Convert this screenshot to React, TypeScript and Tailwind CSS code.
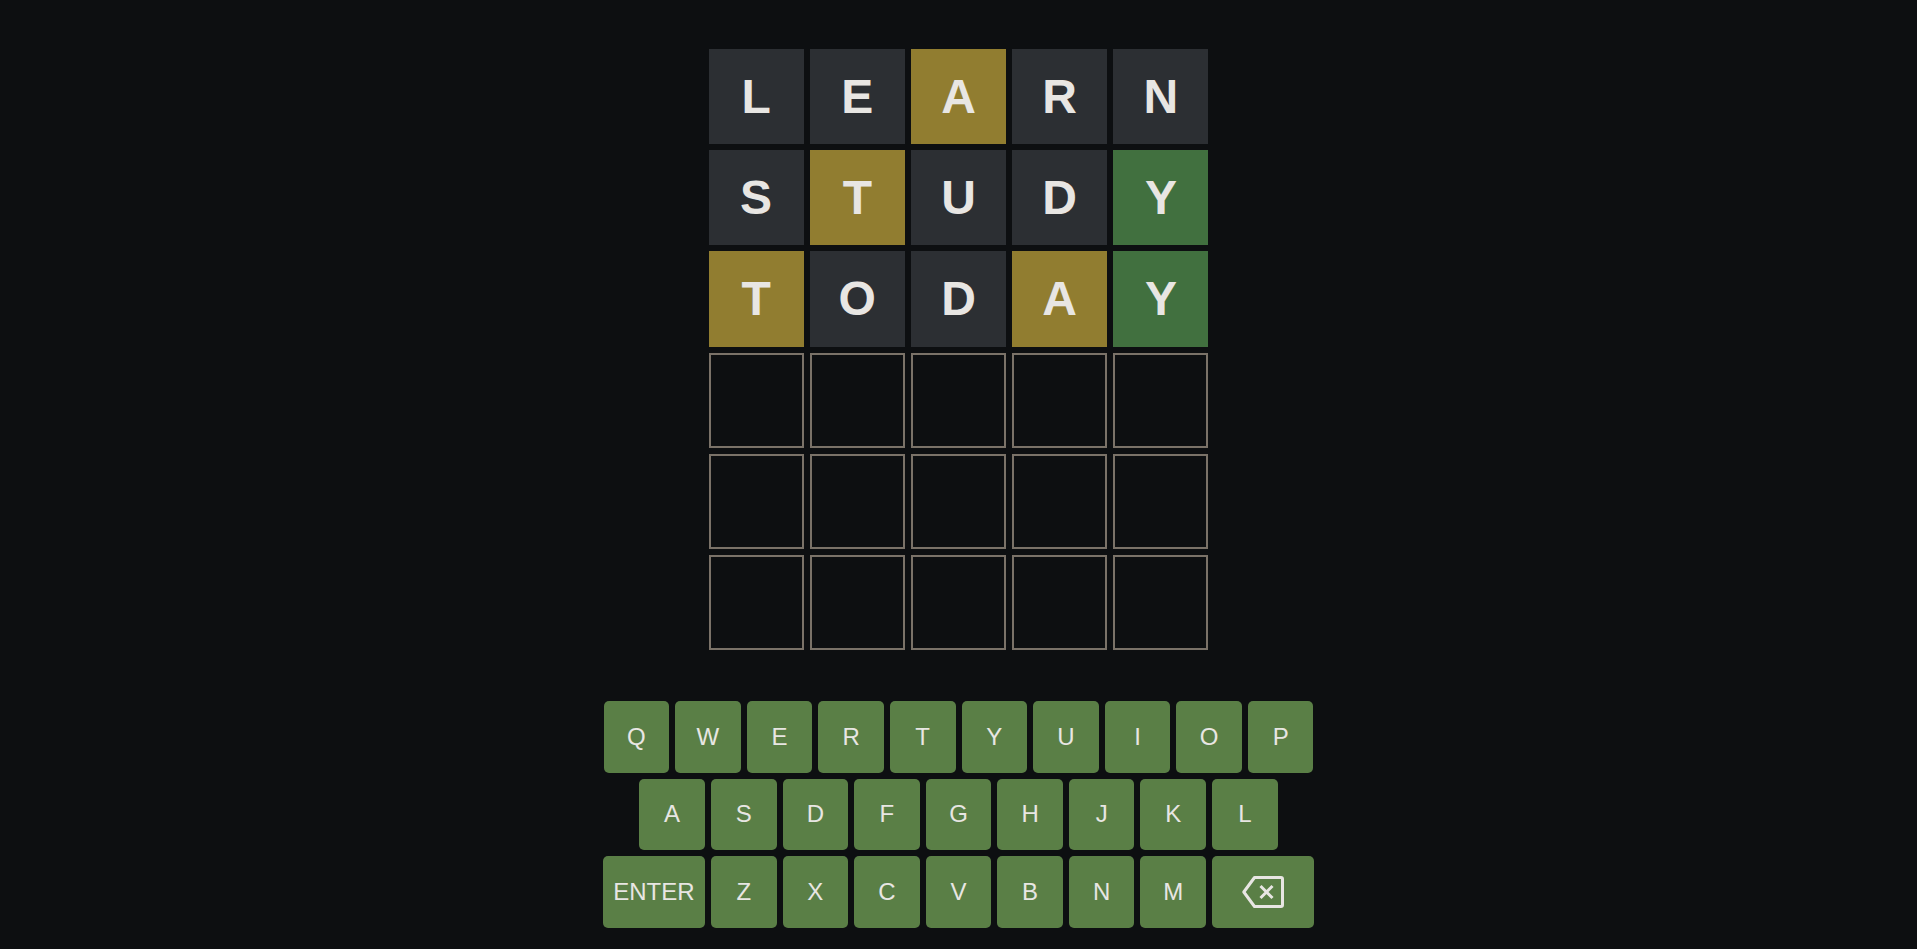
import React from 'react';

type TileState = 'absent' | 'present' | 'correct' | 'empty';

const guesses: { letter: string; state: TileState }[][] = [
    [
        { letter: 'L', state: 'absent' },
        { letter: 'E', state: 'absent' },
        { letter: 'A', state: 'present' },
        { letter: 'R', state: 'absent' },
        { letter: 'N', state: 'absent' },
    ],
    [
        { letter: 'S', state: 'absent' },
        { letter: 'T', state: 'present' },
        { letter: 'U', state: 'absent' },
        { letter: 'D', state: 'absent' },
        { letter: 'Y', state: 'correct' },
    ],
    [
        { letter: 'T', state: 'present' },
        { letter: 'O', state: 'absent' },
        { letter: 'D', state: 'absent' },
        { letter: 'A', state: 'present' },
        { letter: 'Y', state: 'correct' },
    ],
];

const tileClass: Record<TileState, string> = {
    absent: 'bg-[#2c2f33]',
    present: 'bg-[#917d30]',
    correct: 'bg-[#41703f]',
    empty: 'border-2 border-[#7a7268] bg-[#0d0f11]',
};

const keyRows = [
    ['Q', 'W', 'E', 'R', 'T', 'Y', 'U', 'I', 'O', 'P'],
    ['A', 'S', 'D', 'F', 'G', 'H', 'J', 'K', 'L'],
    ['ENTER', 'Z', 'X', 'C', 'V', 'B', 'N', 'M', 'BACK'],
];

const BackspaceIcon: React.FC = () => (
    <svg width="42" height="32" viewBox="0 0 42 32" fill="none" stroke="#e8e6e3" strokeWidth="3">
        <path d="M12.5 1.5 H39 a1.5 1.5 0 0 1 1.5 1.5 V29 a1.5 1.5 0 0 1 -1.5 1.5 H12.5 L1.8 16 Z" strokeLinejoin="round"/>
        <path d="M18.5 10 L30.5 22 M30.5 10 L18.5 22"/>
    </svg>
);

const Tile: React.FC<{ letter?: string; state: TileState }> = ({ letter, state }) => (
    <div className={`aspect-square flex items-center justify-center text-[48px] font-bold text-[#e8e6e3] ${tileClass[state]}`}>
        {letter}
    </div>
);

const Key: React.FC<{ label: string }> = ({ label }) => {
    const wide = label === 'ENTER' || label === 'BACK';
    return (
        <button
            className={`${wide ? 'w-[102px]' : 'w-[65.6px]'} h-[71.5px] rounded-[5px] bg-[#5a7f46] text-[#e8e6e3] text-[24px] flex items-center justify-center`}
        >
            {label === 'BACK' ? <BackspaceIcon/> : label}
        </button>
    );
};

const App: React.FC = () => {
    const rows = Array.from({ length: 6 }, (_, r) =>
        guesses[r] ?? Array.from({ length: 5 }, () => ({ letter: '', state: 'empty' as TileState }))
    );

    return (
        <div className="min-h-screen bg-[#0d0f11] flex flex-col items-center pt-[49px] font-['Liberation_Sans',Arial,sans-serif]">
            {/* Board */}
            <div className="w-[500px] grid grid-cols-5 gap-[6px]">
                {rows.flat().map((t, i) => (
                    <Tile key={i} letter={t.letter} state={t.state}/>
                ))}
            </div>

            {/* Keyboard */}
            <div className="mt-[51px] flex flex-col gap-[6px]">
                {keyRows.map((row, r) => (
                    <div key={r} className="flex justify-center gap-[6px]">
                        {row.map(k => <Key key={k} label={k}/>)}
                    </div>
                ))}
            </div>
        </div>
    );
};

export default App;
